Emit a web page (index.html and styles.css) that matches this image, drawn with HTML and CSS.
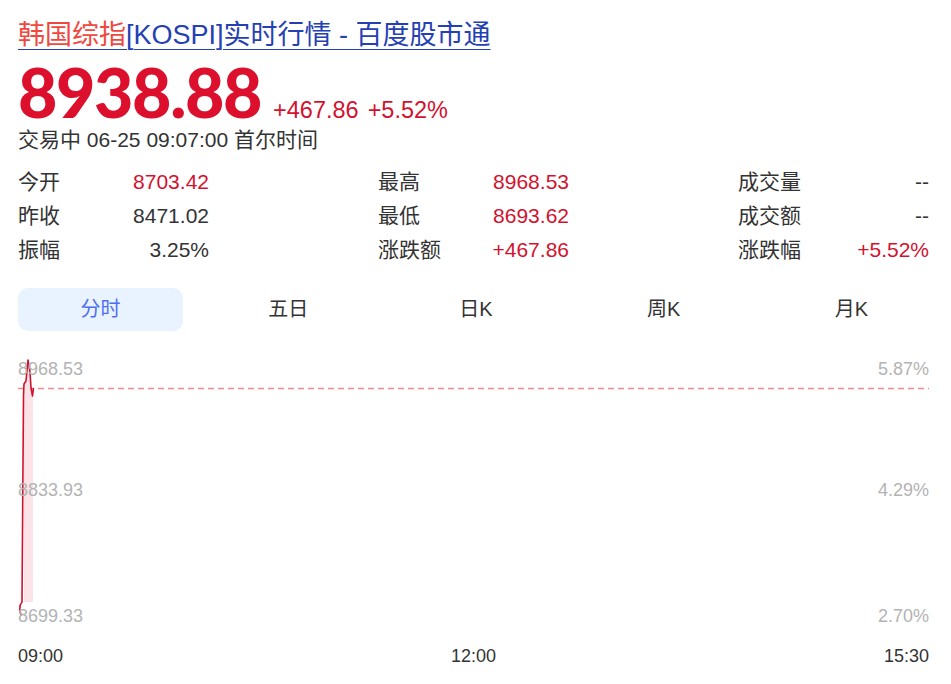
FILE: index.html
```html
<!DOCTYPE html>
<html lang="zh-CN">

<head>
    <meta charset="UTF-8">
    <meta name="viewport" content="width=device-width, initial-scale=1.0">
    <title>韩国综指[KOSPI]实时行情 - 百度股市通</title>
    <link rel="stylesheet" href="styles.css">
</head>

<body>
    <div class="page">
        <h1 class="title">
            <a href="#" class="title-link"><em>韩国综指</em>[KOSPI]实时行情 - 百度股市通</a>
        </h1>

        <div class="price-row">
            <span class="price">8938.88</span>
            <span class="change">+467.86</span>
            <span class="change">+5.52%</span>
        </div>
        <div class="status">交易中 06-25 09:07:00 首尔时间</div>

        <div class="stats">
            <div class="stat"><span class="label">今开</span><span class="value up">8703.42</span></div>
            <div class="stat"><span class="label">最高</span><span class="value up">8968.53</span></div>
            <div class="stat"><span class="label">成交量</span><span class="value">--</span></div>

            <div class="stat"><span class="label">昨收</span><span class="value">8471.02</span></div>
            <div class="stat"><span class="label">最低</span><span class="value up">8693.62</span></div>
            <div class="stat"><span class="label">成交额</span><span class="value">--</span></div>

            <div class="stat"><span class="label">振幅</span><span class="value">3.25%</span></div>
            <div class="stat"><span class="label">涨跌额</span><span class="value up">+467.86</span></div>
            <div class="stat"><span class="label">涨跌幅</span><span class="value up">+5.52%</span></div>
        </div>

        <div class="tabs">
            <div class="tab active">分时</div>
            <div class="tab">五日</div>
            <div class="tab">日K</div>
            <div class="tab">周K</div>
            <div class="tab">月K</div>
        </div>

        <div class="chart">
            <svg class="chart-svg" width="911" height="280" viewBox="0 0 911 280">
                <!-- current price line -->
                <line x1="0" y1="38.5" x2="911" y2="38.5" class="dash" />

                <!-- area under the minute line -->
                <path class="area" d="M6 34 L8 28 L10 10 L12 22 L13 38 L15 45 L15 252 L6 252 Z" />
                <path class="line" d="M4 265 C1 263 1 255 4 252 L5.5 45 L6 34 L8 31 L10 10 L12 22 L13 38 L14.5 46 L15.5 38" />

                <text x="0" y="24.5" class="axis">8968.53</text>
                <text x="0" y="145.5" class="axis">8833.93</text>
                <text x="0" y="271.5" class="axis">8699.33</text>

                <text x="911" y="24.5" class="axis end">5.87%</text>
                <text x="911" y="145.5" class="axis end">4.29%</text>
                <text x="911" y="271.5" class="axis end">2.70%</text>
            </svg>
        </div>

        <div class="times">
            <span>09:00</span>
            <span>12:00</span>
            <span>15:30</span>
        </div>
    </div>
</body>

</html>
```

FILE: styles.css
```css
body {
    margin: 0;
    background-color: #fff;
    color: #333;
    font-family: "Liberation Sans", Arial, "Noto Sans CJK SC", sans-serif;
}

.page {
    width: 911px;
    margin-left: 18px;
    padding-top: 17px;
}

.title {
    margin: 0;
    font-size: 27px;
    font-weight: normal;
    line-height: 36px;
}

.title-link {
    color: #2440b3;
    text-decoration: underline;
    text-underline-offset: 5px;
    text-decoration-thickness: 1px;
}

.title-link em {
    font-style: normal;
    color: #f0483e;
}

.price-row {
    display: flex;
    align-items: baseline;
    margin-top: 9px;
    height: 63px;
}

.price {
    display: inline-block;
    font-family: Lato, "Liberation Sans", sans-serif;
    font-weight: 900;
    font-size: 68px;
    line-height: 60px;
    letter-spacing: -1.4px;
    color: #dc0f2c;
    margin-right: 12px;
}

.change {
    font-size: 23.5px;
    color: #d2122e;
    margin-right: 9px;
}

.status {
    font-size: 21px;
    line-height: 30px;
    color: #333;
}

.stats {
    display: grid;
    grid-template-columns: repeat(3, 191px);
    column-gap: 169px;
    margin-top: 10px;
}

.stat {
    display: flex;
    justify-content: space-between;
    font-size: 21px;
    line-height: 34px;
}

.value.up {
    color: #d2122e;
}

.tabs {
    display: grid;
    grid-template-columns: repeat(5, 165px);
    column-gap: 22.75px;
    margin-top: 21px;
}

.tab {
    height: 43px;
    line-height: 43px;
    text-align: center;
    font-size: 20px;
    color: #333;
    border-radius: 10px;
}

.tab.active {
    background-color: #e8f3ff;
    color: #4e6ef2;
}

.chart {
    margin-top: 19px;
    height: 280px;
}

.chart-svg {
    display: block;
    overflow: visible;
}

.dash {
    stroke: #ee8d8d;
    stroke-width: 1.4;
    stroke-dasharray: 6 4;
}

.area {
    fill: #fbe3e7;
}

.line {
    fill: none;
    stroke: #d0122e;
    stroke-width: 1.6;
    stroke-linejoin: round;
}

.axis {
    font-family: "Liberation Sans", Arial, sans-serif;
    font-size: 18px;
    fill: #b3b3b3;
}

.axis.end {
    text-anchor: end;
}

.times {
    display: flex;
    justify-content: space-between;
    margin-top: 14px;
    font-size: 18px;
    line-height: 24px;
    color: #333;
}
```
